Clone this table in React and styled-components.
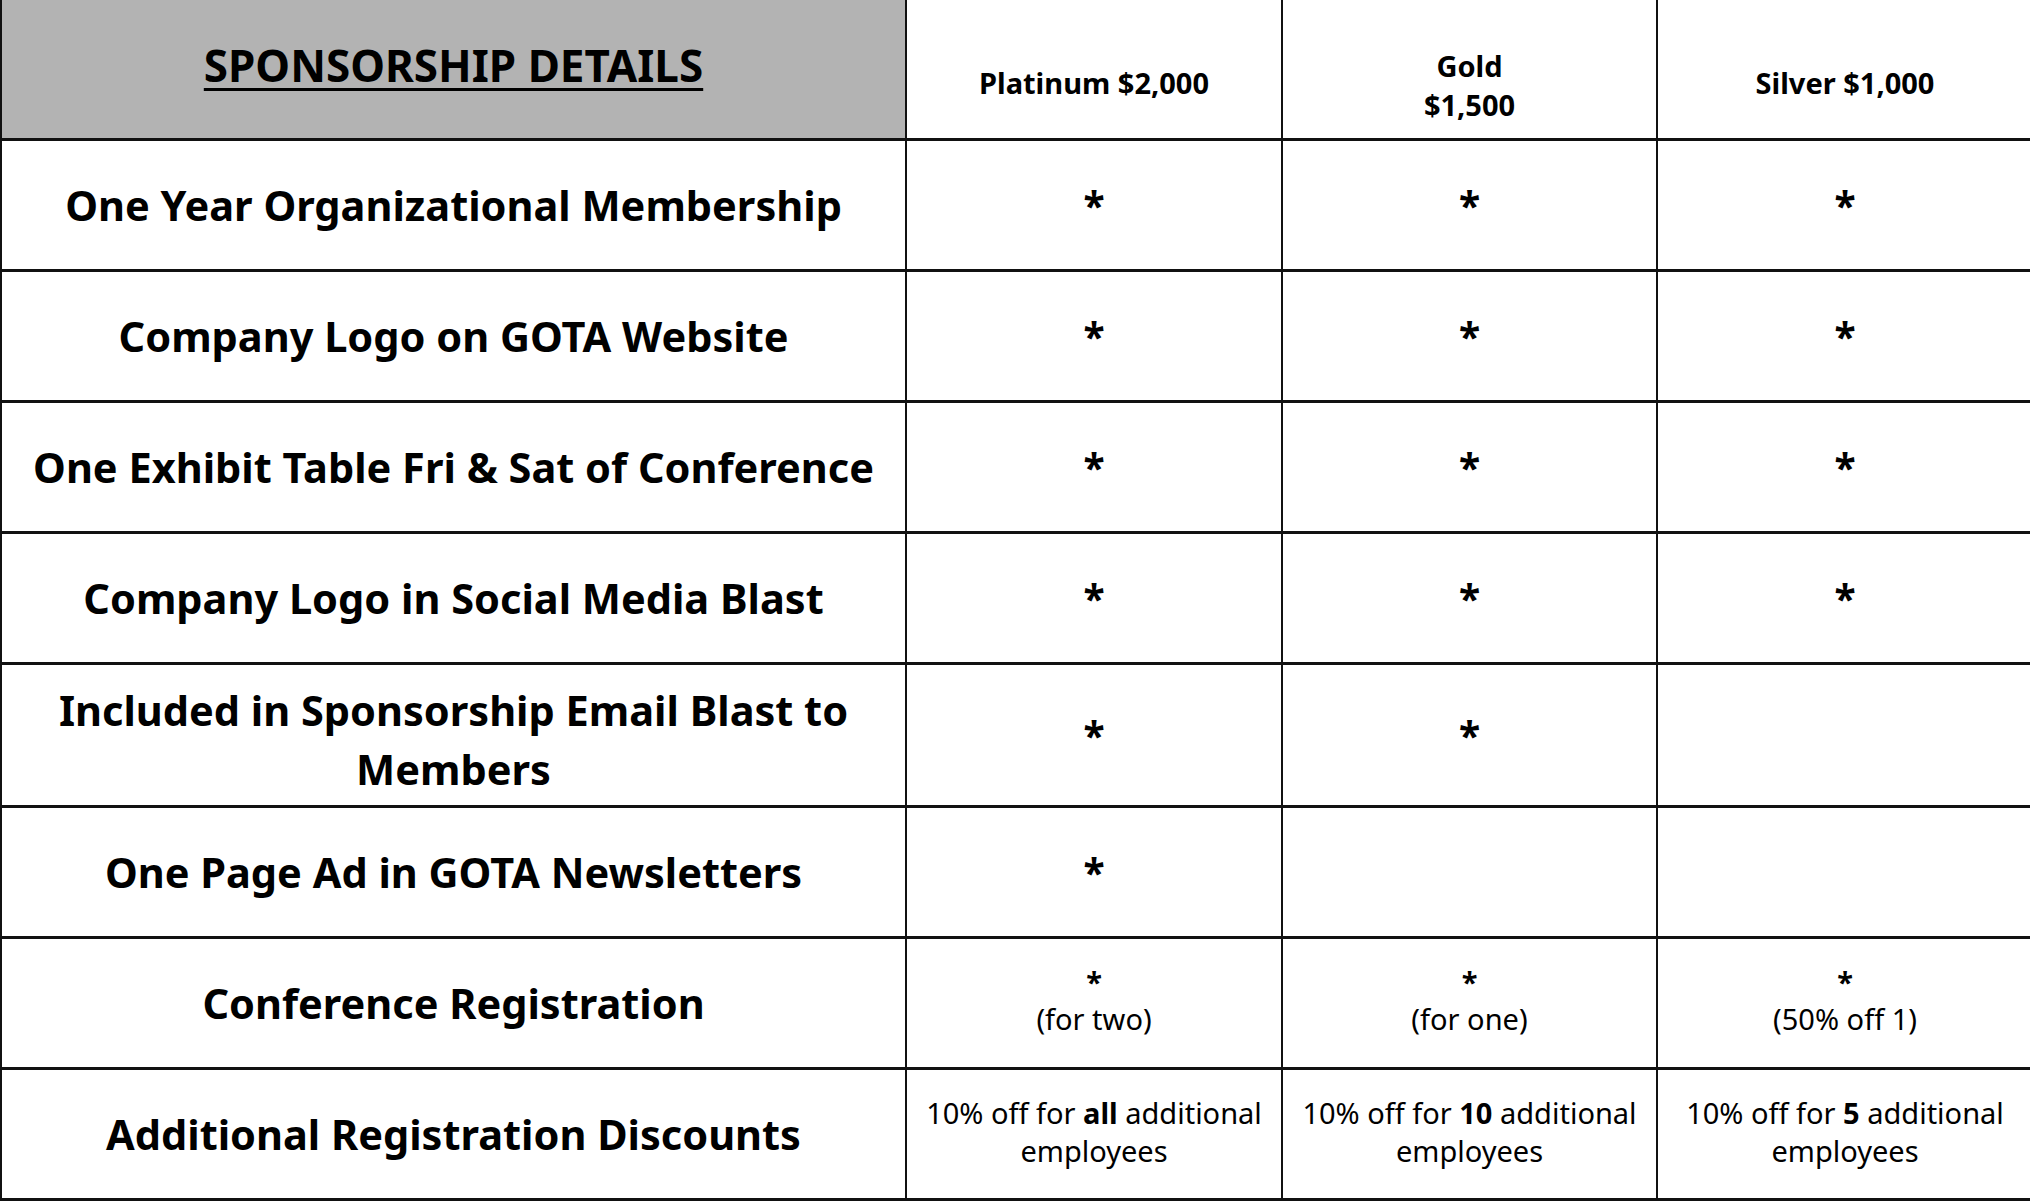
import React from 'react';
import styled, { createGlobalStyle } from 'styled-components';

const GlobalStyle = createGlobalStyle`
  html, body {
    margin: 0;
    padding: 0;
    background: #ffffff;
    overflow: hidden;
  }
  body {
    font-family: "Noto Sans", "Open Sans", sans-serif;
    color: #000;
  }
`;

const Table = styled.div`
  width: 2034px;
  border-left: 2px solid #111;
`;

const Row = styled.div`
  display: grid;
  grid-template-columns: 905px 376px 375px 376px;
  height: ${props => props.$height}px;
  border-bottom: 3px solid #111;
  box-sizing: border-box;
`;

const Cell = styled.div`
  display: flex;
  flex-direction: column;
  align-items: center;
  justify-content: center;
  text-align: center;
  border-right: 2px solid #111;
  box-sizing: border-box;
  min-width: 0;
`;

const TitleCell = styled(Cell)`
  background-color: #b3b3b3;
  padding-bottom: 8px;
`;

const Title = styled.h1`
  margin: 0;
  font-size: 44px;
  font-weight: 700;
  text-decoration: underline;
  text-decoration-thickness: 3px;
  text-underline-offset: 6px;
`;

const TierCell = styled(Cell)`
  padding-top: ${props => (props.$twoLines ? 31 : 26)}px;
  font-size: 29px;
  font-weight: 700;
  line-height: 39px;
`;

const Label = styled(Cell)`
  padding: ${props => (props.$tall ? '10px 14px 0' : '0 14px')};
  font-size: 41.5px;
  font-weight: 700;
  line-height: 59px;
`;

const Mark = styled(Cell)`
  padding-bottom: 2px;
  font-size: 39px;
  font-weight: 700;
`;

const Note = styled(Cell)`
  font-size: 29px;
  font-weight: 400;
  line-height: 38px;
  padding-bottom: 4px;

  b {
    font-weight: 700;
  }
`;

const SmallMark = styled.span`
  font-weight: 700;
  line-height: 36px;
`;

const benefits = [
  { label: 'One Year Organizational Membership', marks: [true, true, true] },
  { label: 'Company Logo on GOTA Website', marks: [true, true, true] },
  { label: 'One Exhibit Table Fri & Sat of Conference', marks: [true, true, true] },
  { label: 'Company Logo in Social Media Blast', marks: [true, true, true] },
  {
    label: (
      <>
        Included in Sponsorship Email Blast to
        <br />
        Members
      </>
    ),
    marks: [true, true, false],
    tall: true,
  },
  { label: 'One Page Ad in GOTA Newsletters', marks: [true, false, false] },
];

const registration = ['(for two)', '(for one)', '(50% off 1)'];
const discounts = ['all', '10', '5'];

const App = () => {
  return (
    <>
      <GlobalStyle />
      <Table>
        <Row $height={141}>
          <TitleCell>
            <Title>SPONSORSHIP DETAILS</Title>
          </TitleCell>
          <TierCell>Platinum $2,000</TierCell>
          <TierCell $twoLines>
            Gold
            <br />
            $1,500
          </TierCell>
          <TierCell>Silver $1,000</TierCell>
        </Row>

        {benefits.map((row, index) => (
          <Row key={index} $height={row.tall ? 143 : 131}>
            <Label $tall={row.tall}>{row.label}</Label>
            {row.marks.map((on, i) => (
              <Mark key={i}>{on ? '*' : ''}</Mark>
            ))}
          </Row>
        ))}

        <Row $height={131}>
          <Label>Conference Registration</Label>
          {registration.map((text, i) => (
            <Note key={i}>
              <SmallMark>*</SmallMark>
              <span>{text}</span>
            </Note>
          ))}
        </Row>

        <Row $height={131}>
          <Label>Additional Registration Discounts</Label>
          {discounts.map((amount, i) => (
            <Note key={i}>
              <span>
                10% off for <b>{amount}</b> additional
              </span>
              <span>employees</span>
            </Note>
          ))}
        </Row>
      </Table>
    </>
  );
};

export default App;
